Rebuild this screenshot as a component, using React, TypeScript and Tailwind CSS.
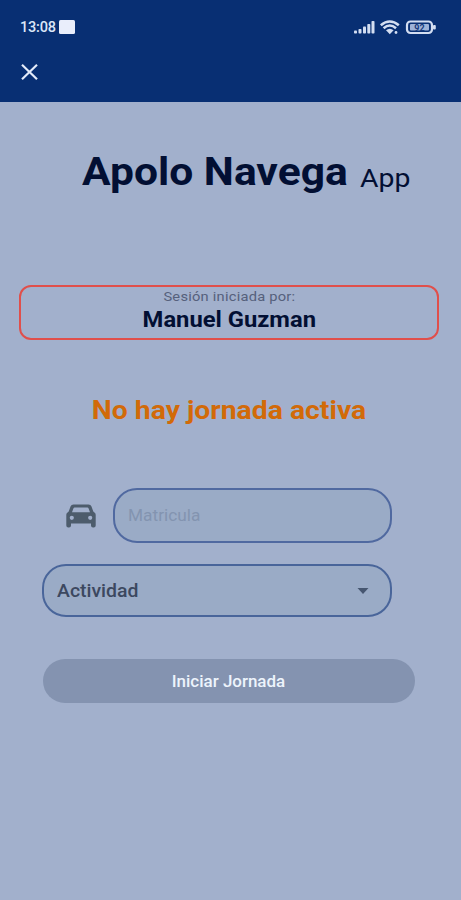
function StatusBar() {
  return (
    <div className="flex h-[54px] items-center justify-between pl-[20px] pr-[24px]">
      <div className="flex items-center">
        <span className="w-[39px] pt-[2px] text-[14.500px] font-medium leading-none tracking-[-0.2px] text-[#dce6f7]">13:08</span>
        <span className="h-[14px] w-[16px] rounded-[1.5px] bg-[#e9eefb]" />
      </div>
      <svg width="84" height="18" viewBox="353 18 84 18" fill="none">
        <g fill="#d3def2">
          <rect x="354" y="30.5" width="3" height="3" rx="0.8" />
          <rect x="358.500" y="29" width="3" height="4.500" rx="0.8" />
          <rect x="363" y="26.500" width="3" height="7" rx="0.8" />
          <rect x="367.300" y="24" width="3" height="9.500" rx="0.8" />
          <rect x="371.500" y="21" width="3" height="12.500" rx="0.8" />
        </g>
        <g stroke="#d3def2" strokeWidth="2.600">
          <path d="M380.800 25.200Q389.800 17.800 398.800 25.200" />
          <path d="M383.600 28.200Q389.800 22.800 396 28.200" />
        </g>
        <path d="M386 30.200Q389.800 27.200 393.600 30.200L389.800 34.200Z" fill="#d3def2" />
        <circle cx="396" cy="32.500" r="1.400" fill="#d3def2" />
        <rect x="407" y="21.500" width="25" height="11.500" rx="3.500" stroke="#d3def2" strokeWidth="2.200" />
        <rect x="410" y="24" width="19" height="6.500" rx="1" fill="#9fb3d8" />
        <rect x="433" y="25" width="2.800" height="4.500" rx="1" fill="#d3def2" />
        <text x="419.500" y="30.700" textAnchor="middle" fontSize="9" fontWeight="700" fill="#163a7c">92</text>
      </svg>
    </div>
  );
}

function CarIcon() {
  return (
    <svg className="ml-[24px] mr-[17px]" width="30" height="24" viewBox="0 0 30 24">
      <path
        fill="#4d5c6c"
        fillRule="evenodd"
        d="M7.500 0.500H22.500Q24.700 0.500 25.500 2.500L27.300 7.600L29 9Q29.700 9.700 29.700 11V21.500Q29.700 23.500 27.700 23.500H27Q25 23.500 25 21.500V19.500H5V21.500Q5 23.500 3 23.500H2.300Q0.300 23.500 0.300 21.500V11Q0.300 9.700 1 9L2.700 7.600L4.500 2.500Q5.300 0.500 7.500 0.500ZM8.600 3.600Q7.700 3.600 7.400 4.400L6 8.300H24L22.600 4.400Q22.300 3.600 21.400 3.600ZM5.800 11.700A2.100 2.100 0 1 0 5.800 15.900A2.100 2.100 0 1 0 5.800 11.700ZM24.200 11.700A2.100 2.100 0 1 0 24.200 15.900A2.100 2.100 0 1 0 24.200 11.700Z"
      />
    </svg>
  );
}

export default function App() {
  return (
    <div className="flex h-[900px] w-[461px] flex-col overflow-hidden whitespace-nowrap bg-[#a2b0cc] font-['Roboto',sans-serif]">
      <header className="h-[102px] shrink-0 bg-[#082f73]">
        <StatusBar />
        <button aria-label="Cerrar" className="ml-[21px] mt-[10px] block">
          <svg width="17" height="16" viewBox="0 0 17 16" stroke="#e3ebf9" strokeWidth="2.200">
            <path d="M1 .8 16 15.200M16 .8 1 15.200" />
          </svg>
        </button>
      </header>

      <h1 className="flex h-[138px] shrink-0 items-start pl-[82px] pt-[47px] text-[#020f33]">
        <span className="w-[278px] origin-left scale-x-[1.092] text-[39px] font-bold leading-[46px]">Apolo Navega</span>
        <span className="mt-[6px] origin-left scale-x-[1.07] text-[26.500px] leading-[46px]">App</span>
      </h1>

      <section className="ml-[19px] mt-[45px] flex h-[55px] w-[420px] shrink-0 flex-col items-center rounded-[12px] border-2 border-[#e04f4b] text-center">
        <p className="mt-[2px] scale-x-[1.13] text-[13px] leading-[16px] tracking-[0.2px] text-[#56617c]">Sesión iniciada por:</p>
        <p className="mt-[2px] scale-x-[1.08] text-[22px] font-bold leading-[26px] text-[#020f33]">Manuel Guzman</p>
      </section>

      <p className="mt-[54px] w-[458px] shrink-0 scale-x-[1.09] text-center text-[26px] font-bold leading-[32px] text-[#d26a08]">
        No hay jornada activa
      </p>

      <div className="ml-[42px] mt-[62px] flex w-[350px] shrink-0 items-center">
        <CarIcon />
        <div className="flex h-[55px] flex-1 items-center rounded-[24px] border-2 border-[#5069a0] bg-[#9aabc6] pl-[13px]">
          <span className="origin-left scale-x-[1.08] text-[16px] leading-[20px] text-[#8394b0]">Matricula</span>
        </div>
      </div>

      <div className="ml-[42px] mt-[21px] flex h-[53px] w-[350px] shrink-0 items-center justify-between rounded-[24px] border-2 border-[#49659a] bg-[#9aabc6] pl-[13px] pr-[21px]">
        <span className="origin-left scale-x-[1.08] text-[18px] font-medium leading-[22px] text-[#3c485f]">Actividad</span>
        <svg width="12" height="6" viewBox="0 0 12 6" fill="#465670">
          <path d="M.5 0h11L6 6z" />
        </svg>
      </div>

      <button className="ml-[43px] mt-[42px] h-[44px] w-[372px] shrink-0 rounded-full bg-[#8493b0] pr-[2px] pt-[2px] text-[16px] font-medium leading-[20px] text-[#edf4fc]">
        <span className="inline-block scale-x-[1.06]">Iniciar Jornada</span>
      </button>
    </div>
  );
}
